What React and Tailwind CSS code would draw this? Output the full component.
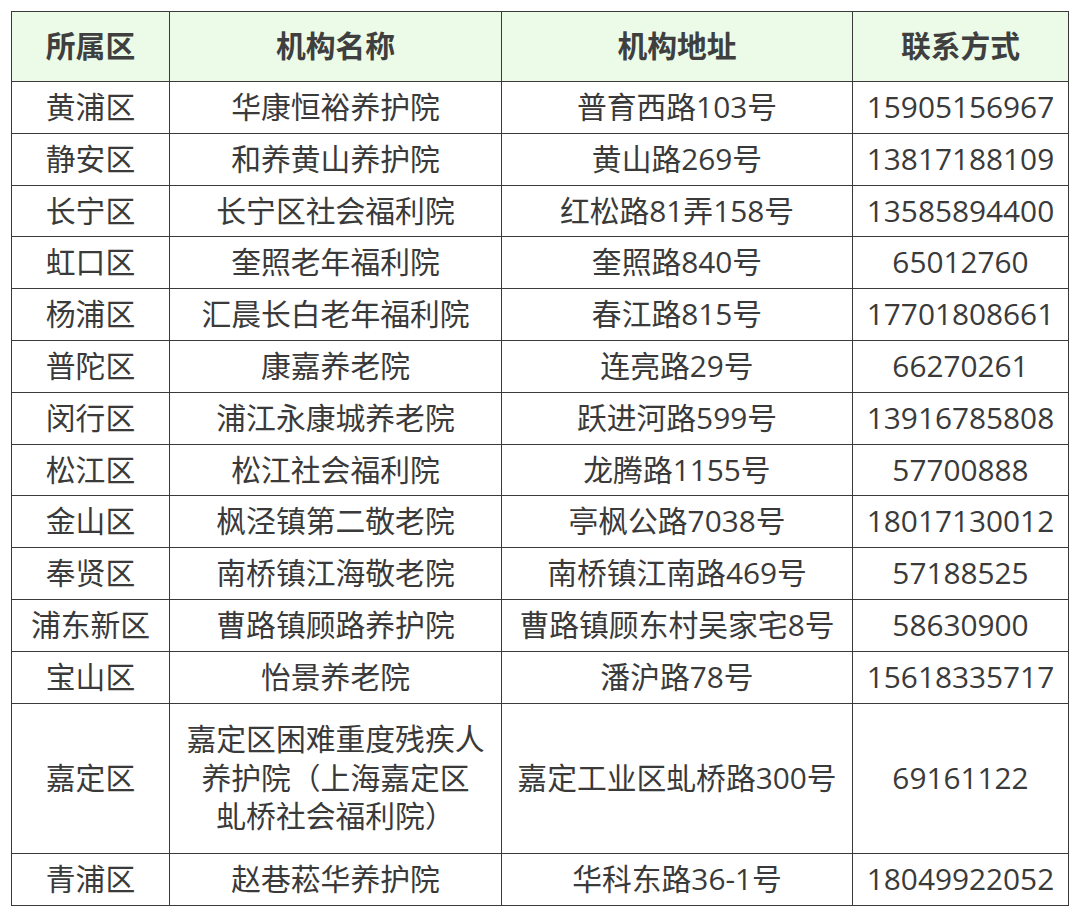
const rows = [
  ['黄浦区', '华康恒裕养护院', '普育西路103号', '15905156967'],
  ['静安区', '和养黄山养护院', '黄山路269号', '13817188109'],
  ['长宁区', '长宁区社会福利院', '红松路81弄158号', '13585894400'],
  ['虹口区', '奎照老年福利院', '奎照路840号', '65012760'],
  ['杨浦区', '汇晨长白老年福利院', '春江路815号', '17701808661'],
  ['普陀区', '康嘉养老院', '连亮路29号', '66270261'],
  ['闵行区', '浦江永康城养老院', '跃进河路599号', '13916785808'],
  ['松江区', '松江社会福利院', '龙腾路1155号', '57700888'],
  ['金山区', '枫泾镇第二敬老院', '亭枫公路7038号', '18017130012'],
  ['奉贤区', '南桥镇江海敬老院', '南桥镇江南路469号', '57188525'],
  ['浦东新区', '曹路镇顾路养护院', '曹路镇顾东村吴家宅8号', '58630900'],
  ['宝山区', '怡景养老院', '潘沪路78号', '15618335717'],
]

const cell = 'border-[1.5px] border-[#3a3a3a] text-center align-middle p-0'

export default function App() {
  return (
    <div className="bg-white w-[1080px] h-[917px] pt-[11px] pl-[11px] font-['Open_Sans','Noto_Sans_CJK_SC',sans-serif] text-[29.8px] text-[#3a3a3a]">
      <table className="border-collapse table-fixed w-[1057px]">
        <colgroup>
          <col className="w-[158px]" />
          <col className="w-[332px]" />
          <col className="w-[351px]" />
          <col className="w-[216px]" />
        </colgroup>
        <thead>
          <tr className="h-[70px] bg-[#ecfbe8] font-bold text-[#3f3f3f]">
            <th className={cell}>所属区</th>
            <th className={cell}>机构名称</th>
            <th className={cell}>机构地址</th>
            <th className={cell}>联系方式</th>
          </tr>
        </thead>
        <tbody>
          {rows.map((r) => (
            <tr key={r[0]} className="h-[51.8px]">
              {r.map((c, i) => (
                <td key={i} className={cell}>{c}</td>
              ))}
            </tr>
          ))}
          <tr className="h-[150px]">
            <td className={cell}>嘉定区</td>
            <td className={cell + ' leading-[38.5px]'}>
              嘉定区困难重度残疾人<br />养护院（上海嘉定区<br />虬桥社会福利院）
            </td>
            <td className={cell}>嘉定工业区虬桥路300号</td>
            <td className={cell}>69161122</td>
          </tr>
          <tr className="h-[52px]">
            <td className={cell}>青浦区</td>
            <td className={cell}>赵巷菘华养护院</td>
            <td className={cell}>华科东路36-1号</td>
            <td className={cell}>18049922052</td>
          </tr>
        </tbody>
      </table>
    </div>
  )
}
